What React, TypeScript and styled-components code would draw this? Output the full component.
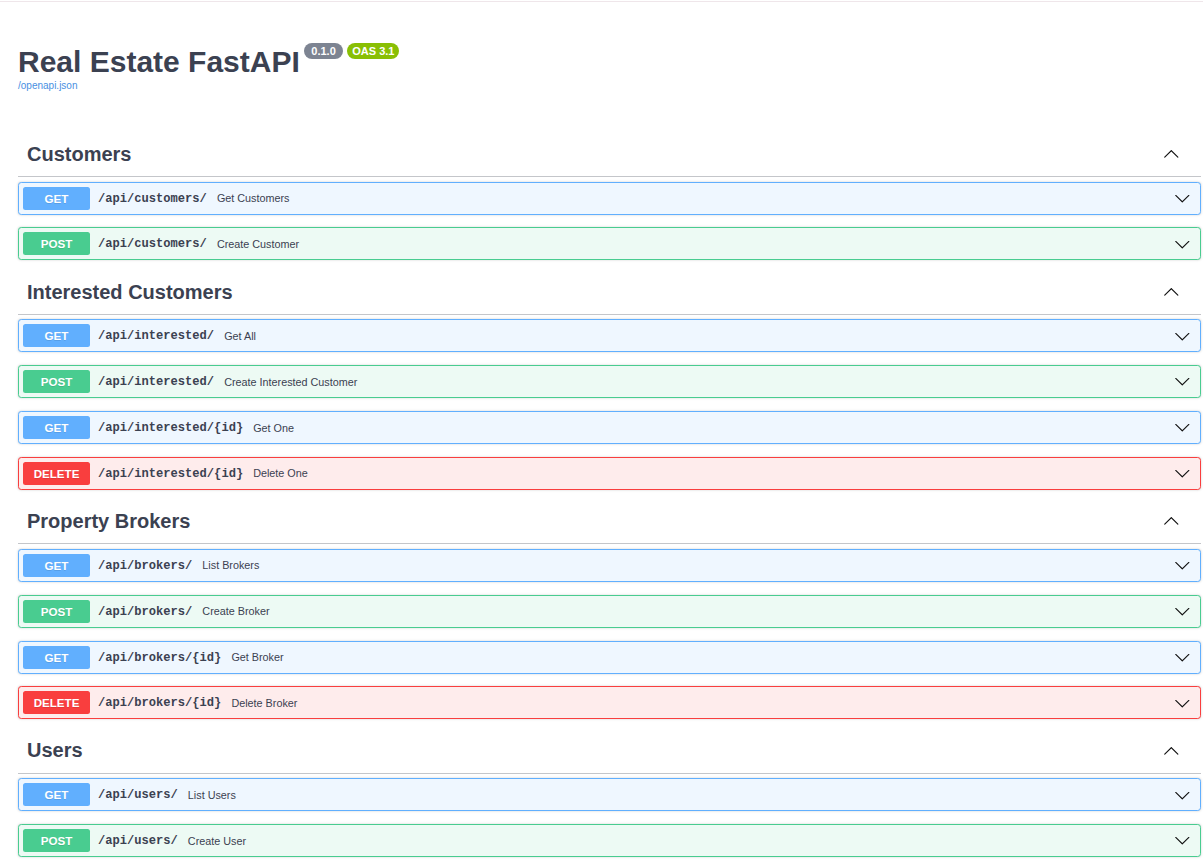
import React from "react";
import styled, { createGlobalStyle } from "styled-components";

const Global = createGlobalStyle`
  html, body {
    margin: 0;
    padding: 0;
    background: #ffffff;
    overflow: hidden;
  }
  body {
    font-family: "Liberation Sans", Arial, sans-serif;
    color: #3b4151;
  }
  * { box-sizing: border-box; }
`;

type Method = "GET" | "POST" | "DELETE";

const palette: Record<Method, { main: string; bg: string }> = {
  GET: { main: "#61affe", bg: "#eff7ff" },
  POST: { main: "#49cc90", bg: "#edfaf4" },
  DELETE: { main: "#f93e3e", bg: "#feecec" },
};

const TopLine = styled.div`
  margin-top: 1px;
  height: 1px;
  background: #efe6ea;
`;

const Wrapper = styled.div`
  padding: 0 2px 0 18px;
`;

const Info = styled.div`
  padding-top: 41.6px;
  margin-bottom: 43.7px;
`;

const Title = styled.h2`
  margin: 0;
  display: flex;
  align-items: flex-start;
  font-family: "Liberation Sans", Arial, sans-serif;
  font-size: 30px;
  line-height: 36px;
  font-weight: 700;
  color: #3b4151;
`;

const Badge = styled.small<{ $bg: string; $pad: number; $gap: number }>`
  display: inline-block;
  margin: -0.6px 0 0 ${(p) => p.$gap}px;
  padding: 2px ${(p) => p.$pad}px;
  border-radius: 57px;
  background: ${(p) => p.$bg};
  color: #ffffff;
  font-family: "Liberation Sans", Arial, sans-serif;
  font-size: 11px;
  line-height: 12px;
  font-weight: 700;
`;

const SpecLink = styled.a`
  display: block;
  font-family: "Liberation Sans", Arial, sans-serif;
  font-size: 10px;
  line-height: 12px;
  color: #4990e2;
  text-decoration: none;
`;

const Section = styled.section`
  display: flex;
  flex-direction: column;
`;

const TagHeader = styled.h3`
  margin: 0 0 4.6px;
  height: 41.7px;
  display: flex;
  align-items: center;
  justify-content: space-between;
  padding: 0 21.7px 3px 9px;
  border-bottom: 1px solid rgba(59, 65, 81, 0.3);
  font-family: "Liberation Sans", Arial, sans-serif;
  font-size: 20px;
  line-height: 23px;
  font-weight: 700;
  color: #3b4151;
`;

const Row = styled.div<{ $method: Method }>`
  height: 33px;
  margin-bottom: 12.8px;
  display: flex;
  align-items: center;
  padding: 0 9.7px 0 4px;
  border: 1px solid ${(p) => palette[p.$method].main};
  background: ${(p) => palette[p.$method].bg};
  border-radius: 3.3px;
  box-shadow: 0 0 2.5px rgba(0, 0, 0, 0.19);
`;

const MethodBadge = styled.span<{ $method: Method }>`
  flex: 0 0 67px;
  height: 23px;
  display: flex;
  align-items: center;
  justify-content: center;
  border-radius: 2.5px;
  background: ${(p) => palette[p.$method].main};
  color: #ffffff;
  font-family: "Liberation Sans", Arial, sans-serif;
  font-size: 11.6px;
  font-weight: 700;
  text-shadow: 0 1px 0 rgba(0, 0, 0, 0.1);
`;

const Path = styled.span`
  padding: 1px 10px 0 8px;
  font-family: "Liberation Mono", "DejaVu Sans Mono", monospace;
  font-size: 12.1px;
  font-weight: 700;
  color: #3b4151;
  white-space: nowrap;
`;

const Description = styled.span`
  flex: 1;
  font-family: "Liberation Sans", Arial, sans-serif;
  font-size: 10.8px;
  color: #3b4151;
  white-space: nowrap;
`;

const ArrowSvg = styled.svg<{ $up?: boolean }>`
  width: 16.6px;
  height: 16.6px;
  flex: 0 0 auto;
  fill: #111111;
  transform: ${(p) => (p.$up ? "rotate(180deg)" : "none")};
`;

const Arrow = ({ up }: { up?: boolean }) => (
  <ArrowSvg $up={up} viewBox="0 0 20 20" aria-hidden="true">
    <path d="M17.418 6.109c.272-.268.709-.268.979 0s.271.701 0 .969l-7.908 7.83c-.27.268-.707.268-.979 0l-7.908-7.83c-.27-.268-.27-.701 0-.969.271-.268.709-.268.979 0L10 13.25l7.418-7.141z" />
  </ArrowSvg>
);

type Op = { method: Method; path: string; summary: string };
type Tag = { name: string; ops: Op[] };

const tags: Tag[] = [
  {
    name: "Customers",
    ops: [
      { method: "GET", path: "/api/customers/", summary: "Get Customers" },
      { method: "POST", path: "/api/customers/", summary: "Create Customer" },
    ],
  },
  {
    name: "Interested Customers",
    ops: [
      { method: "GET", path: "/api/interested/", summary: "Get All" },
      { method: "POST", path: "/api/interested/", summary: "Create Interested Customer" },
      { method: "GET", path: "/api/interested/{id}", summary: "Get One" },
      { method: "DELETE", path: "/api/interested/{id}", summary: "Delete One" },
    ],
  },
  {
    name: "Property Brokers",
    ops: [
      { method: "GET", path: "/api/brokers/", summary: "List Brokers" },
      { method: "POST", path: "/api/brokers/", summary: "Create Broker" },
      { method: "GET", path: "/api/brokers/{id}", summary: "Get Broker" },
      { method: "DELETE", path: "/api/brokers/{id}", summary: "Delete Broker" },
    ],
  },
  {
    name: "Users",
    ops: [
      { method: "GET", path: "/api/users/", summary: "List Users" },
      { method: "POST", path: "/api/users/", summary: "Create User" },
    ],
  },
];

export default function App() {
  return (
    <>
      <Global />
      <TopLine />
      <Wrapper>
        <Info>
          <Title>
            Real Estate FastAPI
            <Badge $bg="#7d8492" $pad={7.5} $gap={4}>0.1.0</Badge>
            <Badge $bg="#89bf04" $pad={5} $gap={4}>OAS 3.1</Badge>
          </Title>
          <SpecLink href="#">/openapi.json</SpecLink>
        </Info>
        {tags.map((t) => (
          <Section key={t.name}>
            <TagHeader>
              <span>{t.name}</span>
              <Arrow up />
            </TagHeader>
            {t.ops.map((o, i) => (
              <Row key={i} $method={o.method}>
                <MethodBadge $method={o.method}>{o.method}</MethodBadge>
                <Path>{o.path}</Path>
                <Description>{o.summary}</Description>
                <Arrow />
              </Row>
            ))}
          </Section>
        ))}
      </Wrapper>
    </>
  );
}
